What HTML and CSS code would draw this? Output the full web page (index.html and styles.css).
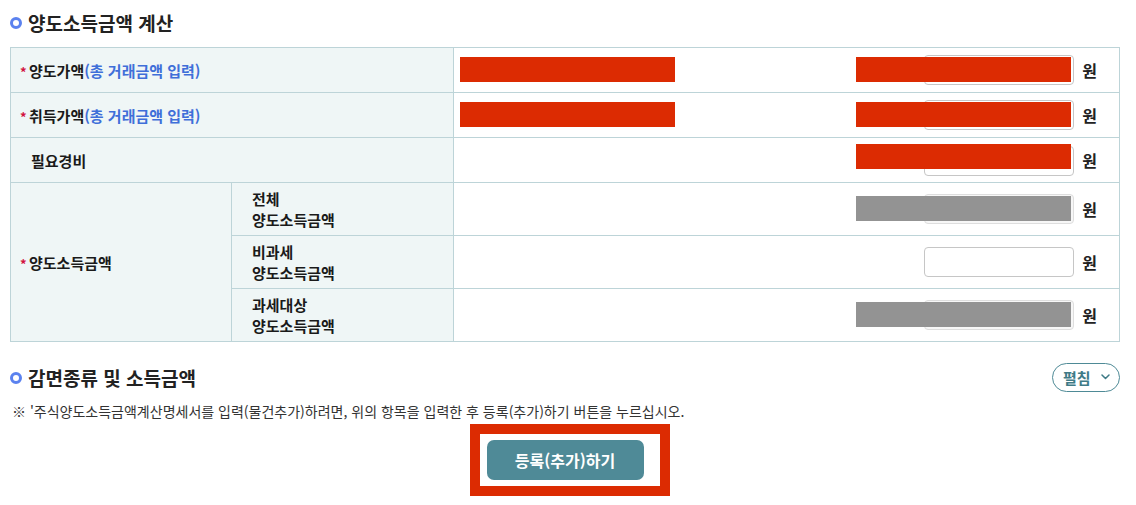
FILE: index.html
```html
<!DOCTYPE html>
<html lang="ko">
<head>
<meta charset="utf-8">
<title>양도소득금액 계산</title>
<link rel="stylesheet" href="styles.css">
</head>
<body>
<div class="page">
  <h2 class="sec-title"><span class="ring"></span>양도소득금액 계산</h2>
  <table class="calc">
    <colgroup><col class="c1"><col class="c2"><col class="c3"></colgroup>
    <tr>
      <th colspan="2"><span class="req">*</span>양도가액<span class="hint">(총 거래금액 입력)</span></th>
      <td>
        <div class="val">
          <div class="redact red left"></div>
          <div class="amount"><div class="inp"></div><div class="redact red over"></div><span class="won">원</span></div>
        </div>
      </td>
    </tr>
    <tr>
      <th colspan="2"><span class="req">*</span>취득가액<span class="hint">(총 거래금액 입력)</span></th>
      <td>
        <div class="val">
          <div class="redact red left"></div>
          <div class="amount"><div class="inp"></div><div class="redact red over"></div><span class="won">원</span></div>
        </div>
      </td>
    </tr>
    <tr>
      <th colspan="2"><span class="req blank"></span>필요경비</th>
      <td>
        <div class="val end">
          <div class="amount"><div class="inp low"></div><div class="redact red over up"></div><span class="won">원</span></div>
        </div>
      </td>
    </tr>
    <tr class="sub">
      <th rowspan="3"><span class="req">*</span>양도소득금액</th>
      <th class="subhead">전체<br>양도소득금액</th>
      <td>
        <div class="val end">
          <div class="amount"><div class="inp dis"></div><div class="redact gray over"></div><span class="won">원</span></div>
        </div>
      </td>
    </tr>
    <tr class="sub">
      <th class="subhead">비과세<br>양도소득금액</th>
      <td>
        <div class="val end">
          <div class="amount"><div class="inp"></div><span class="won">원</span></div>
        </div>
      </td>
    </tr>
    <tr class="sub">
      <th class="subhead">과세대상<br>양도소득금액</th>
      <td>
        <div class="val end">
          <div class="amount"><div class="inp dis"></div><div class="redact gray over"></div><span class="won">원</span></div>
        </div>
      </td>
    </tr>
  </table>

  <div class="sec2-head">
    <h2 class="sec-title"><span class="ring"></span>감면종류 및 소득금액</h2>
    <button class="toggle" type="button">펼침<svg class="chev" width="9" height="6" viewBox="0 0 9 6"><path d="M1 1 L4.5 4.5 L8 1" fill="none" stroke="#3f7b87" stroke-width="1.5" stroke-linecap="round" stroke-linejoin="round"/></svg></button>
  </div>
  <p class="note">※ '주식양도소득금액계산명세서를 입력(물건추가)하려면, 위의 항목을 입력한 후 등록(추가)하기 버튼을 누르십시오.</p>
  <div class="actions">
    <div class="btn-wrap">
      <button class="register" type="button">등록(추가)하기</button>
      <div class="frame"></div>
    </div>
  </div>
</div>
</body>
</html>
```
FILE: styles.css
```css
* { box-sizing: border-box; }
html, body { margin: 0; padding: 0; background: #fff; }
body {
  font-family: "Noto Sans CJK KR", "Noto Sans", sans-serif;
  color: #222;
}
.page {
  width: 1136px;
  min-height: 505px;
  padding: 8px 17px 30px 10px;
}
.sec-title {
  display: flex;
  align-items: center;
  margin: 0;
  height: 28px;
  font-size: 19px;
  font-weight: 700;
  color: #222;
}
.ring {
  width: 12px;
  height: 12px;
  border: 3px solid #5b82ef;
  border-radius: 50%;
  margin: 1px 6px 0 0;
  flex: none;
}
.calc {
  margin-top: 11px;
  width: 1110px;
  border-collapse: collapse;
  table-layout: fixed;
}
.c1 { width: 221px; }
.c2 { width: 222px; }
.calc th, .calc td {
  border: 1px solid #bdd4d8;
  height: 45px;
  padding: 0;
}
.calc tr.sub th, .calc tr.sub td { height: 53px; }
.calc th {
  background: #eff6f6;
  text-align: left;
  font-size: 15px;
  font-weight: 600;
  color: #1a1a1a;
  padding-left: 9px;
}
.calc th.subhead {
  padding-left: 20px;
  line-height: 21px;
}
.req {
  display: inline-block;
  width: 9px;
  color: #d2123e;
  font-weight: 700;
  font-size: 13px;
}
.req.blank { width: 11px; }
.hint { color: #3f6fd9; }
.calc td { background: #fff; }
.val {
  display: flex;
  align-items: center;
  justify-content: space-between;
  padding: 0 22px 0 6px;
}
.val.end { justify-content: flex-end; }
.redact { flex: none; }
.red { background: #dc2b02; }
.gray { background: #939393; }
.left { width: 215px; height: 25px; margin-top: -2px; }
.amount {
  position: relative;
  display: flex;
  align-items: center;
}
.inp {
  width: 150px;
  height: 30px;
  border: 1px solid #c6c6c6;
  border-radius: 4px;
  background: #fff;
}
.inp.low { margin-top: 1px; }
.inp.dis { background: #f7f7f7; border-color: #dedede; }
.over {
  position: absolute;
  left: -68px;
  top: 2px;
  width: 215px;
  height: 25px;
}
.over.up { top: -1px; }
.won {
  margin-left: 8px;
  font-size: 16px;
  font-weight: 600;
  color: #222;
}
.sec2-head {
  display: flex;
  justify-content: space-between;
  align-items: center;
  margin-top: 20px;
  height: 30px;
}
.toggle {
  display: flex;
  align-items: center;
  gap: 10px;
  height: 29px;
  width: 68px;
  padding: 0 0 0 10px;
  border: 1.5px solid #4e8a96;
  border-radius: 15px;
  background: #fff;
  font-family: inherit;
  font-size: 15px;
  font-weight: 700;
  color: #3f7b87;
  margin-right: -1px;
}
.chev { flex: none; }
.note {
  margin: 9px 0 0 2px;
  font-size: 14px;
  line-height: 20px;
  color: #333;
}
.actions {
  display: flex;
  justify-content: center;
  width: 1110px;
  margin-top: 19px;
}
.btn-wrap { position: relative; }
.register {
  display: block;
  width: 157px;
  height: 40px;
  border: 0;
  border-radius: 7px;
  background: #4f8a97;
  color: #fff;
  font-family: inherit;
  font-size: 16px;
  font-weight: 700;
}
.frame {
  position: absolute;
  left: -17px;
  top: -16px;
  width: 200px;
  height: 72px;
  border: 10px solid #dc2b02;
}
```
